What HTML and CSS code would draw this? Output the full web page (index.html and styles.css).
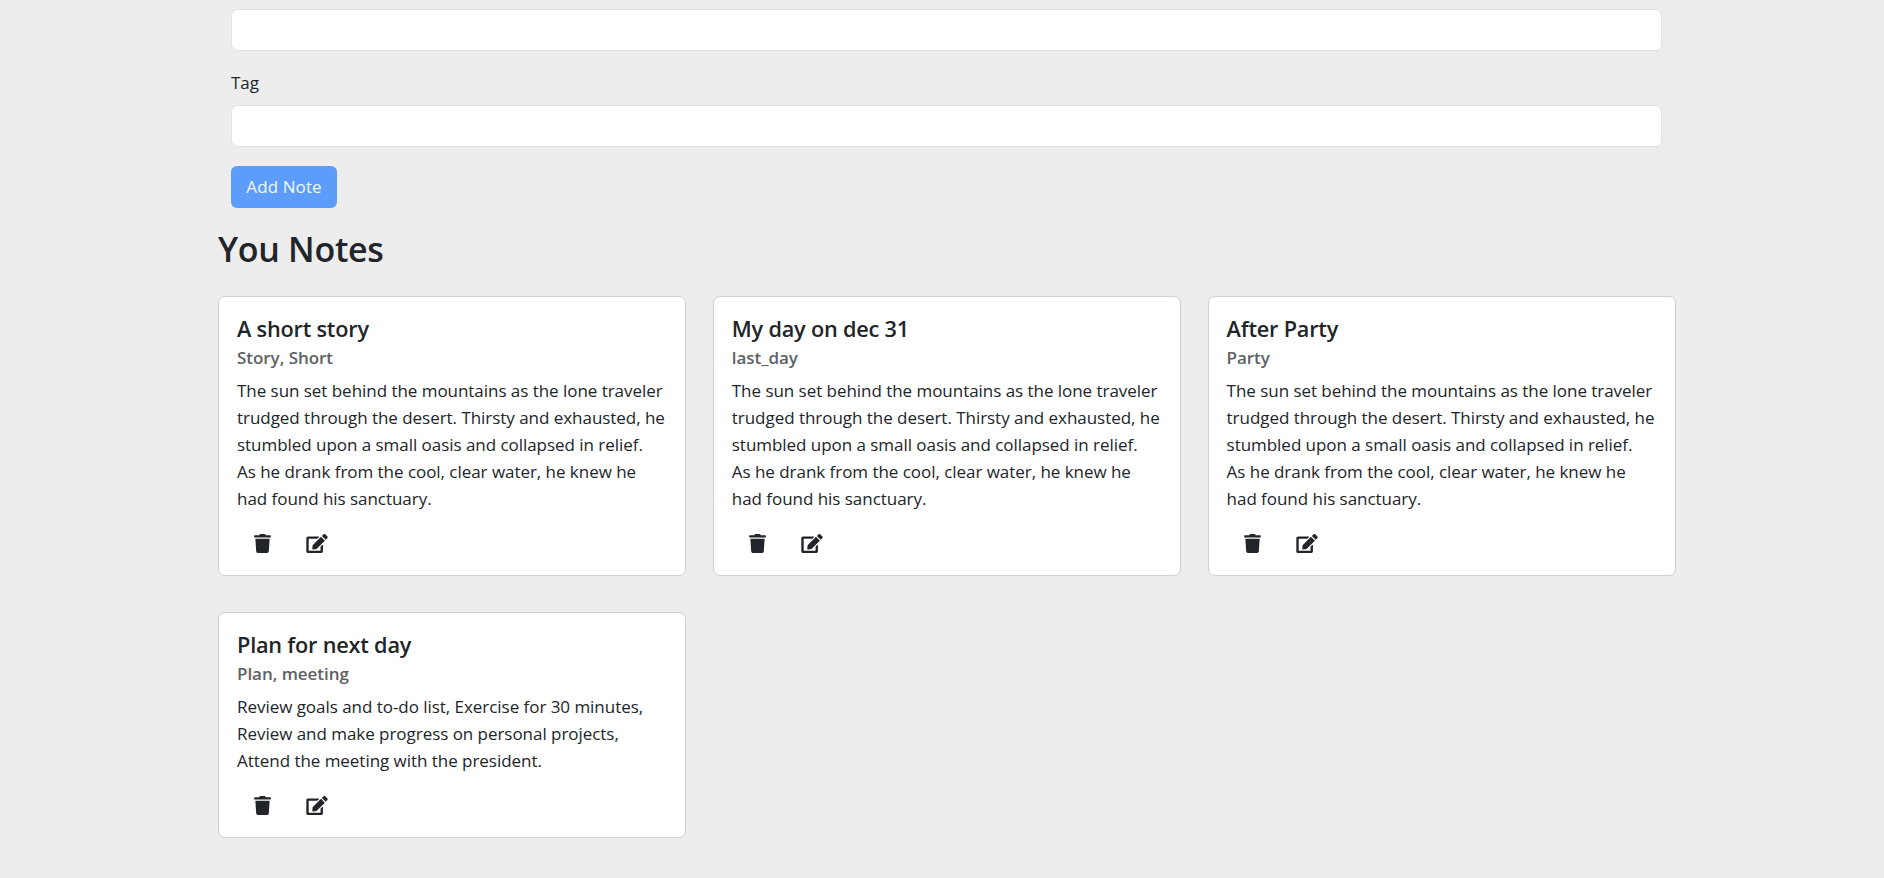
FILE: index.html
```html
<!DOCTYPE html>
<html lang="en">
<head>
  <meta charset="UTF-8">
  <title>Notes</title>
  <meta name="viewport" content="width=device-width, initial-scale=1.0">
  <link rel="stylesheet" href="styles.css">
</head>
<body>

<svg class="icon-defs" aria-hidden="true">
  <symbol id="icon-trash" viewBox="0 0 448 512">
    <path d="M432 32H312l-9.4-18.7A24 24 0 0 0 281.1 0H166.8a23.72 23.72 0 0 0-21.4 13.3L136 32H16A16 16 0 0 0 0 48v32a16 16 0 0 0 16 16h416a16 16 0 0 0 16-16V48a16 16 0 0 0-16-16zM53.2 467a48 48 0 0 0 47.9 45h245.8a48 48 0 0 0 47.9-45L416 128H32z"/>
  </symbol>
  <symbol id="icon-edit" viewBox="0 0 576 512">
    <path d="M402.6 83.2l90.2 90.2c3.8 3.8 3.8 10 0 13.8L274.4 405.6l-92.8 10.3c-12.4 1.4-22.9-9.1-21.5-21.5l10.3-92.8L388.8 83.2c3.8-3.8 10-3.8 13.8 0zm162-22.9l-48.8-48.8c-15.2-15.2-39.9-15.2-55.2 0l-35.4 35.4c-3.8 3.8-3.8 10 0 13.8l90.2 90.2c3.8 3.8 10 3.8 13.8 0l35.4-35.4c15.2-15.3 15.2-40 0-55.2zM384 346.2V448H64V128h229.8c3.2 0 6.2-1.3 8.5-3.5l40-40c7.6-7.6 2.2-20.5-8.5-20.5H48C21.5 64 0 85.5 0 112v352c0 26.5 21.5 48 48 48h352c26.5 0 48-21.5 48-48V306.2c0-10.7-12.9-16-20.5-8.5l-40 40c-2.2 2.3-3.5 5.3-3.5 8.5z"/>
  </symbol>
</svg>

<div class="container">

  <form class="note-form">
    <input type="text" class="form-input" aria-label="Description">
    <label class="form-label" for="tag">Tag</label>
    <input type="text" class="form-input" id="tag">
    <button type="button" class="btn-add">Add Note</button>
  </form>

  <h2 class="notes-heading">You Notes</h2>

  <div class="notes-grid">

    <div class="card">
      <h5 class="card-title">A short story</h5>
      <h6 class="card-tag">Story, Short</h6>
      <p class="card-text">The sun set behind the mountains as the lone traveler trudged through the desert. Thirsty and exhausted, he stumbled upon a small oasis and collapsed in relief. As he drank from the cool, clear water, he knew he had found his sanctuary.</p>
      <div class="card-actions">
        <svg class="icon-trash"><use href="#icon-trash"/></svg>
        <svg class="icon-edit"><use href="#icon-edit"/></svg>
      </div>
    </div>

    <div class="card">
      <h5 class="card-title">My day on dec 31</h5>
      <h6 class="card-tag">last_day</h6>
      <p class="card-text">The sun set behind the mountains as the lone traveler trudged through the desert. Thirsty and exhausted, he stumbled upon a small oasis and collapsed in relief. As he drank from the cool, clear water, he knew he had found his sanctuary.</p>
      <div class="card-actions">
        <svg class="icon-trash"><use href="#icon-trash"/></svg>
        <svg class="icon-edit"><use href="#icon-edit"/></svg>
      </div>
    </div>

    <div class="card">
      <h5 class="card-title">After Party</h5>
      <h6 class="card-tag">Party</h6>
      <p class="card-text">The sun set behind the mountains as the lone traveler trudged through the desert. Thirsty and exhausted, he stumbled upon a small oasis and collapsed in relief. As he drank from the cool, clear water, he knew he had found his sanctuary.</p>
      <div class="card-actions">
        <svg class="icon-trash"><use href="#icon-trash"/></svg>
        <svg class="icon-edit"><use href="#icon-edit"/></svg>
      </div>
    </div>

    <div class="card">
      <h5 class="card-title">Plan for next day</h5>
      <h6 class="card-tag">Plan, meeting</h6>
      <p class="card-text">Review goals and to-do list, Exercise for 30 minutes, Review and make progress on personal projects, Attend the meeting with the president.</p>
      <div class="card-actions">
        <svg class="icon-trash"><use href="#icon-trash"/></svg>
        <svg class="icon-edit"><use href="#icon-edit"/></svg>
      </div>
    </div>

  </div>
</div>

</body>
</html>
```

FILE: styles.css
```css
body {
  font-family: 'Open Sans', sans-serif;
  font-size: 17px;
  letter-spacing: -0.04px;
  margin: 0;
  padding: 0;
  background: #ededed;
  color: #212529;
}
.icon-defs {
  display: none;
}
.container {
  width: 1458px;
  margin: 0 0 0 218px;
  padding-top: 9px;
}
.note-form {
  padding: 0 14px 0 13px;
}
.form-input {
  display: block;
  box-sizing: border-box;
  width: 100%;
  height: 42px;
  padding: 0;
  margin: 0;
  background: white;
  border: 1px solid #dee2e6;
  border-radius: 7px;
}
.form-label {
  display: block;
  line-height: 26px;
  margin: 19px 0 9px;
}
.btn-add {
  display: block;
  margin-top: 19px;
  height: 42px;
  width: 106px;
  padding: 0 0 2px;
  background-color: #5c9dfc;
  border: none;
  border-radius: 6px;
  color: #f4f8ff;
  font-family: inherit;
  font-size: inherit;
  letter-spacing: 0.1px;
}
.notes-heading {
  font-size: 34px;
  font-weight: 600;
  letter-spacing: -0.3px;
  line-height: 42px;
  margin: 20px 0 26px;
}
.notes-grid {
  display: grid;
  grid-template-columns: repeat(3, 468px);
  column-gap: 26.8px;
  row-gap: 36px;
  align-items: start;
}
.card {
  box-sizing: border-box;
  padding: 19px 17.5px 0 18px;
  background: white;
  border: 1px solid #d0d0d0;
  border-radius: 7px;
}
.card-title {
  font-size: 21.7px;
  font-weight: 600;
  letter-spacing: -0.2px;
  line-height: 26px;
  margin: 0 0 5px;
}
.card-tag {
  font-size: 17px;
  font-weight: 600;
  color: #5e6164;
  line-height: 21px;
  margin: 0 0 9px;
}
.card-text {
  max-width: 428.5px;
  line-height: 27px;
  margin: 0 0 21px;
}
.card-actions {
  display: flex;
  align-items: center;
  height: 20px;
  padding: 0 0 22px 17px;
  gap: 35px;
  color: #212529;
}
.icon-trash {
  width: 17px;
  height: 19px;
  fill: currentColor;
}
.icon-edit {
  width: 22px;
  height: 19px;
  fill: currentColor;
}
```
